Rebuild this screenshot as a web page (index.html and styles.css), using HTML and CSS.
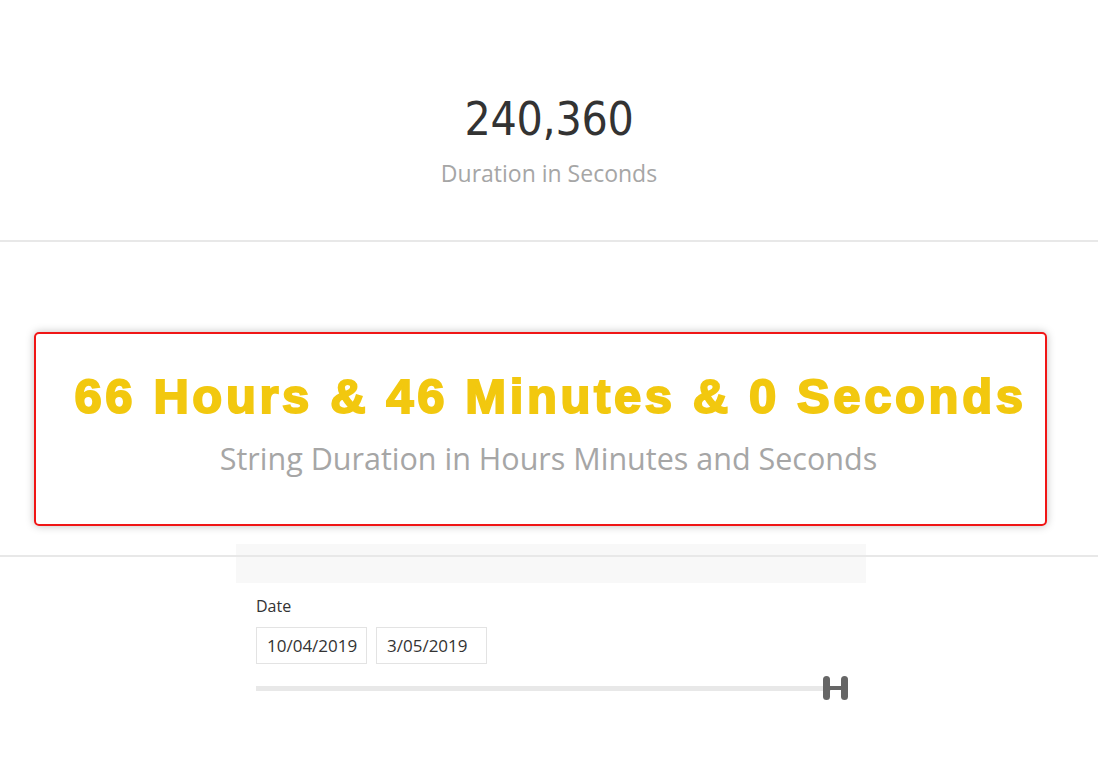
FILE: index.html
```html
<!DOCTYPE html>
<html>
<head>
<meta charset="utf-8">
<link rel="stylesheet" href="styles.css">
</head>
<body>
<div class="page">
  <section class="kpi">
    <div class="kpi-value">240,360</div>
    <div class="kpi-label">Duration in Seconds</div>
  </section>
  <div class="rule rule-top"></div>
  <section class="card-zone">
    <div class="card">
      <div class="card-value">66 Hours &amp; 46 Minutes &amp; 0 Seconds</div>
      <div class="card-label">String Duration in Hours Minutes and Seconds</div>
    </div>
  </section>
  <section class="slicer-zone">
    <div class="rule rule-bottom"></div>
    <div class="slicer">
      <div class="slicer-head"></div>
      <div class="slicer-body">
        <div class="slicer-title">Date</div>
        <div class="dates">
          <div class="date-box">10/04/2019</div>
          <div class="date-box">3/05/2019</div>
        </div>
        <div class="slider">
          <div class="track"></div>
          <div class="handle">
            <svg width="28" height="26" viewBox="0 0 28 26">
              <rect x="1" y="1" width="7" height="24" rx="3.5" fill="#666"/>
              <rect x="19" y="1" width="7" height="24" rx="3.5" fill="#666"/>
              <rect x="6" y="11" width="15" height="4" fill="#666"/>
            </svg>
          </div>
        </div>
      </div>
    </div>
  </section>
</div>
</body>
</html>
```
FILE: styles.css
```css
html, body {
  margin: 0;
  padding: 0;
  background: #ffffff;
}
.page {
  width: 1098px;
  height: 783px;
  position: relative;
  overflow: hidden;
  font-family: "Open Sans", "Noto Sans", sans-serif;
}
.kpi {
  height: 240px;
  display: flex;
  flex-direction: column;
  align-items: center;
}
.kpi-value {
  margin-top: 90px;
  font-family: "DejaVu Sans Condensed", "DejaVu Sans", sans-serif;
  font-size: 46px;
  line-height: 58px;
  color: #333333;
  letter-spacing: -0.3px;
}
.kpi-label {
  margin-top: 10px;
  font-size: 23px;
  line-height: 30px;
  color: #a6a6a6;
}
.rule {
  height: 2px;
  background: #e8e8e8;
}
.card-zone {
  padding: 90px 0 0 34px;
  height: 212px;
}
.card {
  width: 993px;
  padding-left: 16px;
  height: 190px;
  border: 2px solid #f01616;
  border-radius: 5px;
  box-shadow: 0 0 8px rgba(0,0,0,0.25);
  display: flex;
  flex-direction: column;
  align-items: center;
  box-sizing: content-box;
}
.card-value {
  margin-top: 34px;
  font-family: "Liberation Sans", Arial, sans-serif;
  font-weight: 700;
  font-size: 49px;
  line-height: 56px;
  color: #f2c80f;
  -webkit-text-stroke: 2px #f2c80f;
  letter-spacing: 3.6px;
  padding-left: 4px;
  white-space: nowrap;
}
.card-label {
  margin-top: 14px;
  font-size: 30.5px;
  line-height: 40px;
  color: #a6a6a6;
}
.slicer-zone {
  position: relative;
  height: 240px;
}
.rule-bottom {
  position: absolute;
  left: 0;
  right: 0;
  top: 11px;
  z-index: 2;
}
.slicer {
  margin-left: 236px;
  width: 630px;
}
.slicer-head {
  height: 39px;
  background: #f8f8f8;
}
.slicer-body {
  padding: 13px 0 0 20px;
}
.slicer-title {
  font-size: 16px;
  line-height: 20px;
  color: #333333;
}
.dates {
  display: flex;
  gap: 9px;
  margin-top: 11px;
}
.date-box {
  height: 35px;
  border: 1px solid #e3e3e3;
  display: flex;
  align-items: center;
  padding-left: 10px;
  box-sizing: content-box;
  width: 99px;
  font-size: 17px;
  color: #333333;
}
.slider {
  position: relative;
  width: 595px;
  height: 28px;
  margin-top: 10px;
}
.track {
  position: absolute;
  left: 0;
  right: 20px;
  top: 12px;
  height: 5px;
  background: #e8e8e8;
}
.handle {
  position: absolute;
  left: 566px;
  top: 1px;
  line-height: 0;
}
```
